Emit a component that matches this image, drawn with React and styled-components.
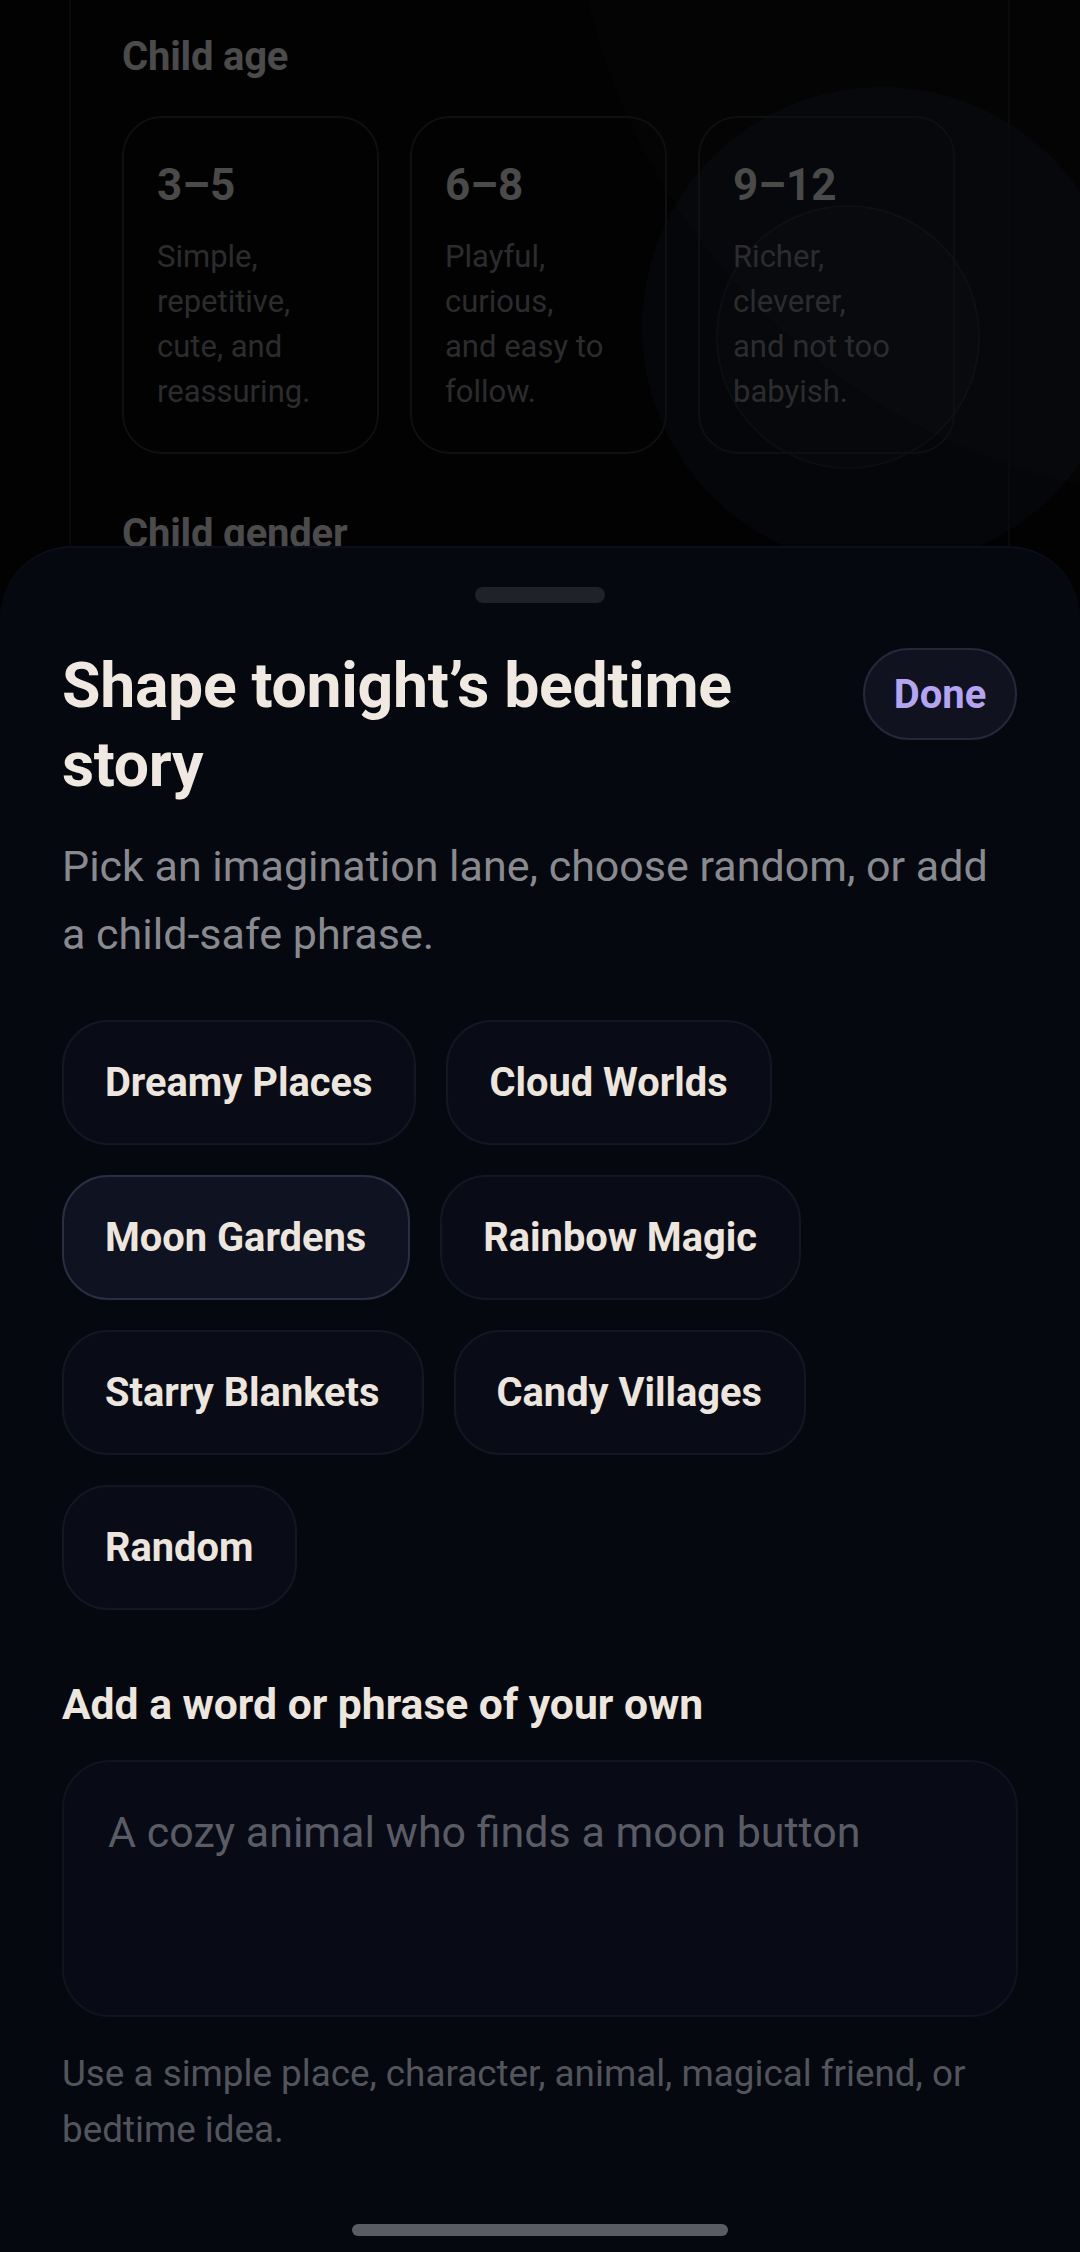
import React, { useState } from "react";
import styled, { createGlobalStyle } from "styled-components";

const GlobalStyle = createGlobalStyle`
  * {
    box-sizing: border-box;
  }
  body {
    margin: 0;
    background: #020203;
    font-family: Roboto, "Noto Sans", "Liberation Sans", sans-serif;
    -webkit-font-smoothing: antialiased;
  }
`;

const Screen = styled.div`
  position: relative;
  width: 1080px;
  height: 2252px;
  overflow: hidden;
  background: #020203;
  display: flex;
  flex-direction: column;
`;

// dimmed page behind the sheet
const Backdrop = styled.div`
  position: relative;
  height: 546px;
  flex-shrink: 0;
  overflow: hidden;
  padding: 32px 0 0 122px;
`;

const Glow = styled.div`
  position: absolute;
  border-radius: 50%;
  pointer-events: none;
  left: ${(p) => p.x}px;
  top: ${(p) => p.y}px;
  width: ${(p) => p.size}px;
  height: ${(p) => p.size}px;
  background: ${(p) => p.fill};
  border: ${(p) => (p.ring ? "2px solid rgba(255,255,255,0.025)" : "none")};
`;

const Rail = styled.div`
  position: absolute;
  top: 0;
  bottom: 0;
  left: ${(p) => p.x}px;
  width: 2px;
  background: #0a0a0c;
`;

const FadedHeading = styled.div`
  position: relative;
  font-size: 40px;
  line-height: 50px;
  font-weight: 700;
  color: #4b4b4b;
  letter-spacing: -0.2px;
`;

const AgeRow = styled.div`
  position: relative;
  display: flex;
  gap: 31px;
  margin: 34px 0 55px;
`;

const AgeCard = styled.div`
  width: 257px;
  height: 338px;
  border-radius: 40px;
  border: 2px solid #0f0f11;
  padding: 41px 58px 0 33px;
`;

const AgeTitle = styled.div`
  font-size: 44px;
  line-height: 52px;
  font-weight: 700;
  color: #4a4a4a;
`;

const AgeText = styled.div`
  margin-top: 23px;
  font-size: 31px;
  line-height: 45px;
  color: #2c2c2e;
`;

const Sheet = styled.div`
  flex: 1;
  display: flex;
  flex-direction: column;
  background: #05080f;
  border-top: 2px solid #0a0f1b;
  border-radius: 72px 72px 0 0;
  padding: 0 62px;
`;

const Handle = styled.div`
  align-self: center;
  width: 130px;
  height: 16px;
  border-radius: 8px;
  background: #1f212b;
  margin-top: 39px;
`;

const Header = styled.div`
  display: flex;
  align-items: flex-start;
  justify-content: space-between;
  gap: 30px;
  margin-top: 43px;
`;

const Title = styled.h1`
  margin: 0;
  font-size: 62.5px;
  line-height: 79px;
  font-weight: 700;
  color: #efe9e2;
  letter-spacing: -0.3px;
  max-width: 760px;
`;

const DoneButton = styled.button`
  flex-shrink: 0;
  margin-top: 2px;
  margin-right: 1px;
  width: 154px;
  height: 92px;
  border-radius: 46px;
  border: 2px solid #25273a;
  background: #10121f;
  color: #b4a4f3;
  font-family: inherit;
  font-size: 40px;
  font-weight: 700;
  cursor: pointer;
`;

const Lead = styled.p`
  margin: 28px 0 0;
  font-size: 43px;
  line-height: 68px;
  color: #898a8f;
`;

const Chips = styled.div`
  display: flex;
  flex-wrap: wrap;
  gap: 30px;
  margin-top: 52px;
  max-width: 760px;
`;

const Chip = styled.button`
  height: 125px;
  padding: 0 42px 0 41px;
  border-radius: 46px;
  border: 2px solid ${(p) => (p.$active ? "#2b2e42" : "#131722")};
  background: ${(p) => (p.$active ? "#0f1220" : "#090c16")};
  color: #ece6df;
  font-family: inherit;
  font-size: 39.8px;
  font-weight: 700;
  cursor: pointer;
`;

const Label = styled.div`
  margin-top: 69px;
  font-size: 42.6px;
  line-height: 50px;
  font-weight: 700;
  color: #ece6de;
`;

const PhraseBox = styled.textarea`
  margin-top: 31px;
  height: 257px;
  width: 100%;
  resize: none;
  border-radius: 48px;
  border: 2px solid #11141f;
  background: #080b15;
  padding: 42px 44px;
  font-family: inherit;
  font-size: 43px;
  line-height: 56px;
  color: #ece6de;
  outline: none;
  &::placeholder {
    color: #5a5c65;
  }
`;

const Hint = styled.p`
  margin: 29px 0 0;
  font-size: 36.8px;
  line-height: 56px;
  color: #53555d;
`;

const HomeBar = styled.div`
  align-self: center;
  margin-top: auto;
  margin-bottom: 16px;
  width: 376px;
  height: 12px;
  border-radius: 6px;
  background: #5a5c64;
`;

const ages = [
  { range: "3–5", text: "Simple, repetitive, cute, and reassuring." },
  { range: "6–8", text: "Playful, curious, and easy to follow." },
  { range: "9–12", text: "Richer, cleverer, and not too babyish." },
];

const lanes = [
  "Dreamy Places",
  "Cloud Worlds",
  "Moon Gardens",
  "Rainbow Magic",
  "Starry Blankets",
  "Candy Villages",
  "Random",
];

export default function App() {
  const [lane, setLane] = useState("Moon Gardens");
  const [phrase, setPhrase] = useState("");

  return (
    <Screen>
      <GlobalStyle />
      <Backdrop>
        <Glow x={570} y={-800} size={1300} fill="rgba(255,255,255,0.012)" />
        <Glow x={642} y={87} size={480} fill="rgba(120,130,200,0.035)" />
        <Glow x={716} y={205} size={264} fill="rgba(120,130,200,0.02)" ring />
        <Rail x={69} />
        <Rail x={1008} />
        <FadedHeading>Child age</FadedHeading>
        <AgeRow>
          {ages.map((a) => (
            <AgeCard key={a.range}>
              <AgeTitle>{a.range}</AgeTitle>
              <AgeText>{a.text}</AgeText>
            </AgeCard>
          ))}
        </AgeRow>
        <FadedHeading>Child gender</FadedHeading>
      </Backdrop>

      <Sheet>
        <Handle />
        <Header>
          <Title>Shape tonight’s bedtime story</Title>
          <DoneButton>Done</DoneButton>
        </Header>
        <Lead>
          Pick an imagination lane, choose random, or add a child-safe phrase.
        </Lead>
        <Chips>
          {lanes.map((l) => (
            <Chip key={l} $active={lane === l} onClick={() => setLane(l)}>
              {l}
            </Chip>
          ))}
        </Chips>
        <Label>Add a word or phrase of your own</Label>
        <PhraseBox
          value={phrase}
          onChange={(e) => setPhrase(e.target.value)}
          placeholder="A cozy animal who finds a moon button"
        />
        <Hint>
          Use a simple place, character, animal, magical friend, or bedtime
          idea.
        </Hint>
        <HomeBar />
      </Sheet>
    </Screen>
  );
}
